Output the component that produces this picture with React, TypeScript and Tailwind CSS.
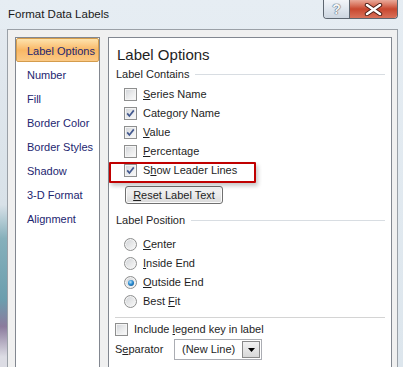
import type { ReactNode } from "react";

const menu = [
  "Label Options",
  "Number",
  "Fill",
  "Border Color",
  "Border Styles",
  "Shadow",
  "3-D Format",
  "Alignment",
];

function CheckBox({ checked }: { checked?: boolean }) {
  return (
    <span className="relative w-[13px] h-[13px] shrink-0 border border-[#8e8f8f] bg-gradient-to-br from-[#cfd2d7] via-[#e9eaeb] to-[#fbfbfb] shadow-[inset_0_0_0_1px_#f4f4f4]">
      {checked && (
        <svg className="absolute inset-0" width="11" height="11" viewBox="0 0 11 11">
          <path d="M2.2 5.4 L4.4 8 L8.8 2.4" fill="none" stroke="#43598f" strokeWidth="1.7" />
        </svg>
      )}
    </span>
  );
}

function Radio({ checked }: { checked?: boolean }) {
  return (
    <span className="flex items-center justify-center w-[13px] h-[13px] shrink-0 rounded-full border border-[#8e8f8f] bg-gradient-to-br from-[#cfd2d7] via-[#e6e7e8] to-[#fbfbfb] shadow-[inset_0_0_0_1px_#f4f4f4]">
      {checked && (
        <span className="w-[6px] h-[6px] rounded-full bg-[radial-gradient(circle_at_40%_35%,#bfe6fb_0%,#2a8bd0_45%,#0b4a85_100%)]" />
      )}
    </span>
  );
}

function CheckRow({ checked, children }: { checked?: boolean; children: ReactNode }) {
  return (
    <div className="flex items-center h-[19px] pl-[15px] gap-[6px]">
      <CheckBox checked={checked} />
      <span className="leading-[19px]">{children}</span>
    </div>
  );
}

function RadioRow({ checked, children }: { checked?: boolean; children: ReactNode }) {
  return (
    <div className="flex items-center h-[19px] pl-[15px] gap-[6px]">
      <Radio checked={checked} />
      <span className="leading-[19px]">{children}</span>
    </div>
  );
}

function Group({ title }: { title: string }) {
  return (
    <div className="flex items-center h-[19px] pl-[7px] pr-[6px] gap-[6px]">
      <span className="leading-[19px]">{title}</span>
      <span className="flex-1 h-px bg-[#d8dde2] -mt-[1px]" />
    </div>
  );
}

export default function App() {
  return (
    <div className="w-[403px] h-[367px] overflow-hidden flex flex-col bg-gradient-to-b from-[#e6edf3] to-[#dde6ed] font-['Liberation_Sans',Arial,sans-serif] text-[11px] text-[#1e1e1e]">
      {/* title bar */}
      <div className="h-[29px] flex shrink-0">
        <span className="self-center pl-[8px] pt-[1px] text-[11.5px] text-[#1a1a1a]">Format Data Labels</span>
        <div className="ml-auto mr-[5px] flex h-[19px] border border-t-0 border-[#5d6670] rounded-b-[4px] overflow-hidden">
          <div className="w-[26px] flex items-center justify-center bg-gradient-to-b from-[#f2f5f9] via-[#dfe6ee] to-[#cdd6e0] border-r border-[#5d6670] text-[14px] font-bold text-[#f4f6f8] [text-shadow:0_0_1px_#5b6470,0_0_1px_#5b6470,0_0_1px_#5b6470]">
            ?
          </div>
          <div className="w-[47px] flex items-center justify-center bg-gradient-to-b from-[#e9a999] via-[#c8472f] to-[#d9715a]">
            <svg width="19" height="13" viewBox="0 0 19 13">
              <path d="M3 2 L16 11 M16 2 L3 11" stroke="#4a1c14" strokeWidth="4.4" strokeLinecap="round" />
              <path d="M3 2 L16 11 M16 2 L3 11" stroke="#ffffff" strokeWidth="2.6" strokeLinecap="round" />
            </svg>
          </div>
        </div>
      </div>

      <div className="flex-1 flex">
        {/* left glass frame */}
        <div className="w-[7px] bg-[linear-gradient(to_bottom,#e3e9ef_0%,#d8e1e8_52%,#86b0bb_62%,#6b9eae_80%,#8b7b9d_88%,#dcdce4_97%)]" />

        {/* window body */}
        <div className="flex-1 flex gap-[8px] pt-[7px] pl-[7px] pr-[5px] bg-[#f0f0f0] border-l border-t border-r border-[#9aa0a7]">
          {/* category list */}
          <div className="w-[85px] shrink-0 bg-white border-l border-t border-r border-[#828790]">
            {menu.map((m, i) => (
              <div
                key={m}
                className={
                  i === 0
                    ? "h-[24px] pl-[10px] pt-[2px] leading-[20px] text-[#1d2670] border border-[#d49c4c] rounded-[2px] bg-gradient-to-b from-[#fde3ad] via-[#f9b764] to-[#fbc985]"
                    : "h-[24px] pl-[11px] pt-[3px] leading-[20px] text-[#1d2670]"
                }
              >
                {m}
              </div>
            ))}
          </div>

          {/* options panel */}
          <div className="relative w-[284px] shrink-0 bg-white border-l border-t border-r border-[#828790]">
            <div className="pt-[8px] pl-[8px] text-[15px] leading-[18px]">Label Options</div>
            <div className="mt-[1px]">
              <Group title="Label Contains" />
            </div>
            <div className="mt-[1px]">
              <CheckRow>
                <u>S</u>eries Name
              </CheckRow>
              <CheckRow checked>
                Cate<u>g</u>ory Name
              </CheckRow>
              <CheckRow checked>
                <u>V</u>alue
              </CheckRow>
              <CheckRow>
                <u>P</u>ercentage
              </CheckRow>
              <CheckRow checked>
                S<u>h</u>ow Leader Lines
              </CheckRow>
            </div>
            <div className="pl-[16px] mt-[6px]">
              <button className="w-[98px] h-[18px] rounded-[3px] border border-[#707070] bg-gradient-to-b from-[#f3f3f3] via-[#ebebeb] to-[#d9d9d9] shadow-[inset_0_0_0_1px_#fbfbfb] text-[11px] leading-[16px] text-[#1e1e1e]">
                <u>R</u>eset Label Text
              </button>
            </div>
            <div className="mt-[7px]">
              <Group title="Label Position" />
            </div>
            <div className="mt-[5px]">
              <RadioRow>
                <u>C</u>enter
              </RadioRow>
              <RadioRow>
                <u>I</u>nside End
              </RadioRow>
              <RadioRow checked>
                <u>O</u>utside End
              </RadioRow>
              <RadioRow>
                Best <u>F</u>it
              </RadioRow>
            </div>
            <div className="mt-[6px] mx-[6px] h-px bg-[#d4d4d4]" />
            <div className="mt-[2px] flex items-center h-[19px] pl-[6px] gap-[6px]">
              <CheckBox />
              <span className="leading-[19px]">
                Include <u>l</u>egend key in label
              </span>
            </div>
            <div className="flex items-center h-[21px] pl-[6px]">
              <span className="w-[59px] leading-[19px]">
                S<u>e</u>parator
              </span>
              <div className="w-[88px] h-[21px] flex border border-[#abadb3] bg-white">
                <span className="flex-1 pl-[7px] leading-[19px]">(New Line)</span>
                <span className="w-[18px] m-[1px] flex items-center justify-center border border-[#8a8a8a] bg-gradient-to-b from-[#f2f2f2] to-[#d8d8d8]">
                  <svg width="7" height="4" viewBox="0 0 7 4">
                    <path d="M0 0 H7 L3.5 4 Z" fill="#000000" />
                  </svg>
                </span>
              </div>
            </div>

            {/* annotation around Show Leader Lines */}
            <div className="absolute left-0 top-[124px] w-[147px] h-[21px] border-2 border-[#c00000] rounded-[1px] shadow-[2px_3px_4px_rgba(0,0,0,0.22)]" />
          </div>
        </div>

        {/* right glass frame */}
        <div className="w-[5px]" />
      </div>
    </div>
  );
}
